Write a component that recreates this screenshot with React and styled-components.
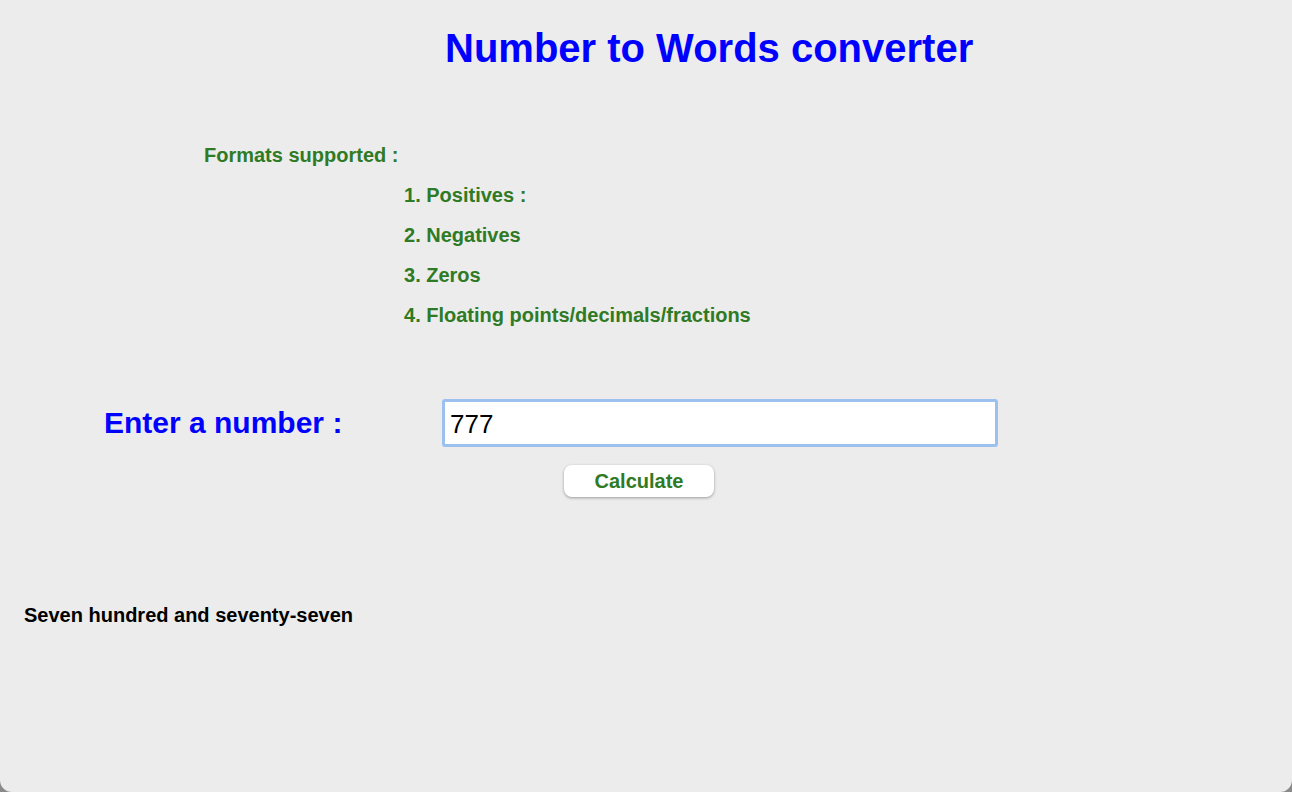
import React, { useState } from 'react';
import styled, { createGlobalStyle } from 'styled-components';

const GlobalStyle = createGlobalStyle`
    html, body {
        margin: 0;
        padding: 0;
        background: #8a8a8a;
    }
    body {
        font-family: 'Liberation Sans', Arial, sans-serif;
    }
`;

const Page = styled.div`
    width: 1292px;
    height: 792px;
    box-sizing: border-box;
    background-color: #ececec;
    border-radius: 0 0 12px 12px;
    padding: 24px 24px 0;
    overflow: hidden;
`;

const Title = styled.h1`
    margin: 0;
    padding-left: 421px;
    font-size: 40px;
    font-weight: bold;
    color: #0000ff;
    line-height: 48px;
`;

const Formats = styled.div`
    margin-top: 71px;
    padding-left: 180px;
    color: #2f7a24;
    font-weight: bold;
    font-size: 20px;
`;

const FormatsLabel = styled.div`
    line-height: 24px;
`;

const FormatList = styled.ol`
    list-style: none;
    margin: 16px 0 0;
    padding-left: 200px;
    display: flex;
    flex-direction: column;
    gap: 16px;
    & li {
        line-height: 24px;
    }
`;

const InputRow = styled.div`
    margin-top: 72px;
    display: flex;
    align-items: center;
    padding-left: 80px;
`;

const Label = styled.label`
    width: 338px;
    color: #0000ff;
    font-weight: bold;
    font-size: 30px;
`;

const NumberInput = styled.input`
    width: 556px;
    height: 48px;
    box-sizing: border-box;
    border: 3px solid #9cc1ee;
    border-radius: 3px;
    background: #fff;
    padding: 2px 5px 0;
    font-family: 'Liberation Sans', Arial, sans-serif;
    font-size: 26px;
    color: #000;
    outline: none;
`;

const ButtonRow = styled.div`
    display: flex;
    padding-left: 540px;
    margin-top: 18px;
`;

const CalcButton = styled.button`
    width: 150px;
    height: 32px;
    background: #fff;
    border: none;
    border-radius: 8px;
    box-shadow: 0 1px 3px rgba(0, 0, 0, 0.35);
    color: #2f7a24;
    font-family: 'Liberation Sans', Arial, sans-serif;
    font-weight: bold;
    font-size: 20px;
    padding: 0;
    cursor: pointer;
`;

const Result = styled.p`
    margin: 106px 0 0;
    font-weight: bold;
    font-size: 20px;
    color: #000;
    line-height: 24px;
`;

const formats = [
    'Positives :',
    'Negatives',
    'Zeros',
    'Floating points/decimals/fractions',
];

export default function App() {
    const [value, setValue] = useState('777');

    return (
        <>
            <GlobalStyle />
            <Page>
                <Title>Number to Words converter</Title>
                <Formats>
                    <FormatsLabel>Formats supported :</FormatsLabel>
                    <FormatList>
                        {formats.map((f, i) => (
                            <li key={f}>{i + 1}. {f}</li>
                        ))}
                    </FormatList>
                </Formats>
                <InputRow>
                    <Label htmlFor='num'>Enter a number :</Label>
                    <NumberInput id='num' type='text' value={value} onChange={e => setValue(e.target.value)} />
                </InputRow>
                <ButtonRow>
                    <CalcButton>Calculate</CalcButton>
                </ButtonRow>
                <Result>Seven hundred and seventy-seven</Result>
            </Page>
        </>
    );
}
